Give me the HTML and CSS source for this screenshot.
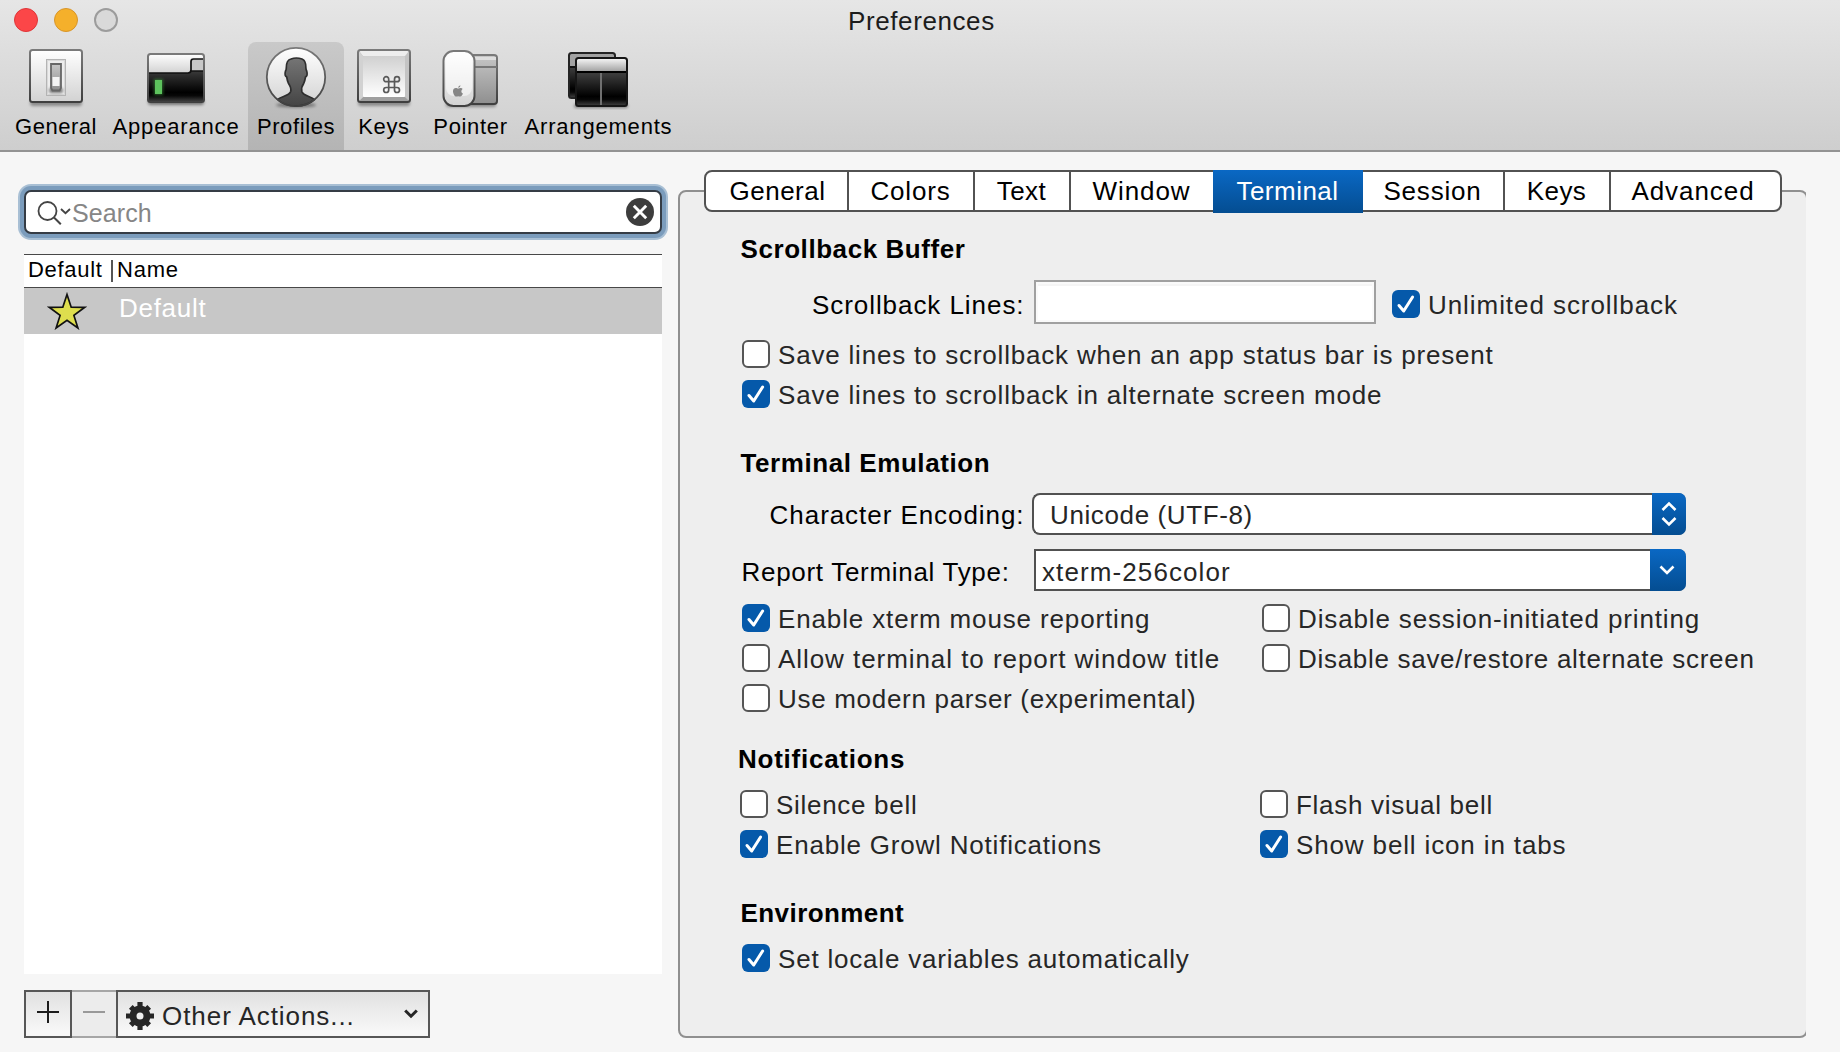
FILE: index.html
```html
<!DOCTYPE html>
<html lang="en">
<head>
<meta charset="utf-8">
<title>Preferences</title>
<link rel="stylesheet" href="styles.css">
</head>
<body>
<svg class="defs" width="0" height="0" aria-hidden="true">
  <defs>
    <linearGradient id="edge" x1="0" y1="0" x2="0" y2="1"><stop offset="0" stop-color="#7a7a7a"/><stop offset="1" stop-color="#3f3f3f"/></linearGradient>
    <linearGradient id="plate" x1="0" y1="0" x2="0" y2="1"><stop offset="0" stop-color="#ffffff"/><stop offset="1" stop-color="#d2d2d2"/></linearGradient>
    <linearGradient id="plateUp" x1="0" y1="0" x2="0" y2="1"><stop offset="0" stop-color="#d0d0d0"/><stop offset="1" stop-color="#ffffff"/></linearGradient>
    <linearGradient id="dark" x1="0" y1="0" x2="0" y2="1"><stop offset="0" stop-color="#4c4c4c"/><stop offset=".35" stop-color="#3a3a3a"/><stop offset=".8" stop-color="#000"/><stop offset=".87" stop-color="#080808"/><stop offset="1" stop-color="#444"/></linearGradient>
    <linearGradient id="title" x1="0" y1="0" x2="0" y2="1"><stop offset="0" stop-color="#f2f2f2"/><stop offset="1" stop-color="#a4a4a4"/></linearGradient>
    <linearGradient id="head" x1="0" y1="0" x2="0" y2="1"><stop offset="0" stop-color="#757575"/><stop offset="1" stop-color="#444"/></linearGradient>
    <linearGradient id="grey" x1="0" y1="0" x2="0" y2="1"><stop offset="0" stop-color="#c6c6c6"/><stop offset="1" stop-color="#8f8f8f"/></linearGradient>
    <filter id="soft" x="-30%" y="-100%" width="160%" height="300%"><feGaussianBlur stdDeviation="1.8"/></filter>
    <path id="tick" d="M7 15.5 11.7 21 20.6 7" fill="none" stroke="#fff" stroke-width="3" stroke-linecap="round" stroke-linejoin="round"/>
  </defs>
</svg>

<header class="titlebar">
  <div class="caption">
    <div class="lights"><i class="light close"></i><i class="light minimize"></i><i class="light zoom"></i></div>
    <h1 class="title">Preferences</h1>
  </div>
  <nav class="toolbar">
    <a class="tool general">
      <svg width="64" height="66" viewBox="24 44 64 66">
        <rect x="30" y="100" width="52" height="6" rx="3" fill="#000" opacity=".35" filter="url(#soft)"/>
        <rect x="30" y="50" width="52" height="52" rx="2.5" fill="url(#plate)" stroke="url(#edge)" stroke-width="2"/>
        <rect x="46.5" y="59.5" width="19" height="36" fill="#d9d9d9" stroke="#b4b4b4"/>
        <rect x="48" y="61" width="16" height="33" fill="#ededed"/>
        <rect x="49" y="88" width="14" height="5" rx="2" fill="#777" filter="url(#soft)"/>
        <path d="M51 64h10v24l-1.500 2.500h-7L51 88z" fill="url(#grey)" stroke="#666" stroke-width="1.800"/>
        <path d="M52.500 77h7v9h-7z" fill="#f4f4f4"/>
      </svg>
      <span>General</span>
    </a>
    <a class="tool appearance">
      <svg width="64" height="66" viewBox="144 44 64 66">
        <rect x="148" y="99" width="56" height="6" rx="3" fill="#000" opacity=".45" filter="url(#soft)"/>
        <rect x="148" y="54" width="56" height="48" rx="2.500" fill="url(#dark)"/>
        <path d="M148 73V56.500q0-2.500 2.500-2.500h51q2.500 0 2.500 2.500V59h-10.500q-2.500 0-2.500 2.500V70q0 3-3 3z" fill="url(#plate)"/>
        <path d="M191 71V61.500q0-2.500 2.500-2.500H204v12z" fill="#c8c8c8"/>
        <path d="M148 73h40q3 0 3-3v-8.500q0-2.500 2.500-2.500H204M191 71h13" fill="none" stroke="#111" stroke-width="1.700"/>
        <rect x="148" y="54" width="56" height="48" rx="2.500" fill="none" stroke="url(#edge)" stroke-width="2"/>
        <rect x="154" y="79" width="9" height="16" fill="#3c9a3c" filter="url(#soft)" opacity=".6"/>
        <rect x="155" y="80" width="7" height="14" fill="#5dc25d"/>
      </svg>
      <span>Appearance</span>
    </a>
    <a class="tool profiles active">
      <svg width="64" height="66" viewBox="264 44 64 66">
        <ellipse cx="296" cy="105" rx="20" ry="2.500" fill="#000" opacity=".4" filter="url(#soft)"/>
        <circle cx="296" cy="77" r="29" fill="url(#plate)"/>
        <path d="M277.500 99.500c3.500-3.300 12-3.500 13.200-8 .7-3-.4-5.500-2.200-8-1-2.200-1.400-4-1.800-6.500-1.600-.8-1.900-3.500-1.200-6 .8-1 .8-1.300.8-3 0-4.700 1.700-8.500 4.700-9 3.500-1.300 7.500-1.200 11 0 3 1 4 4.500 3.900 9 0 1.700.2 2 .8 3 .7 2.500.4 5.200-1.200 6-.4 2.500-.8 4.300-1.800 6.500-1.800 2.500-2.600 5-1.900 8 1.200 4.500 9.200 4.700 12.700 8Q307 106 296 106q-11.500 0-18.500-6.500z" fill="url(#head)" stroke="#2e2e2e" stroke-width="1.700"/>
        <circle cx="296" cy="77" r="29.200" fill="none" stroke="url(#edge)" stroke-width="1.800"/>
      </svg>
      <span>Profiles</span>
    </a>
    <a class="tool keys">
      <svg width="64" height="66" viewBox="352 44 64 66">
        <rect x="358" y="100" width="52" height="6" rx="3" fill="#000" opacity=".35" filter="url(#soft)"/>
        <rect x="358" y="50" width="52" height="52" rx="2.500" fill="#c4c4c4"/>
        <path d="M359 51h50l-4 5h-42z" fill="#eee"/><path d="M359 101l4-4h42l4 4z" fill="#9f9f9f"/><path d="M359 51l4 5v41l-4 4z" fill="#d2d2d2"/>
        <rect x="363" y="56" width="42" height="41" rx="1" fill="url(#plateUp)"/>
        <rect x="358" y="50" width="52" height="52" rx="2.500" fill="none" stroke="url(#edge)" stroke-width="2"/>
        <path d="M388.700 81.700h5.800v5.800h-5.800zM388.700 81.700h-2.400a2.500 2.500 0 1 1 2.400-2.500zM394.500 81.700v-2.500a2.500 2.500 0 1 1 2.500 2.500zM394.500 87.500h2.500a2.500 2.500 0 1 1-2.500 2.500zM388.700 87.500V90a2.500 2.500 0 1 1-2.500-2.500z" fill="none" stroke="#5a5a5a" stroke-width="1.700"/>
      </svg>
      <span>Keys</span>
    </a>
    <a class="tool pointer">
      <svg width="64" height="66" viewBox="439 44 64 66">
        <rect x="446" y="102" width="50" height="5" rx="2" fill="#000" opacity=".35" filter="url(#soft)"/>
        <rect x="465" y="55" width="32" height="49" rx="3" fill="url(#grey)" stroke="url(#edge)" stroke-width="2"/>
        <path d="M470 57h26v3h-26z" fill="#dedede"/><path d="M470 67h27" stroke="#777" stroke-width="2"/>
        <rect x="443.500" y="51" width="31" height="55" rx="10" fill="url(#plate)" stroke="url(#edge)" stroke-width="2"/>
        <rect x="446" y="53" width="26" height="43" rx="8" fill="#fff" opacity=".5"/>
        <path d="M458.200 88.500c1.200 0 1.500-.6 2.700-.5.700 0 1.300.3 1.800.9-1.900 1.300-1.600 3.900.3 4.700-.8 1.900-1.800 3-2.700 3-.8 0-1.200-.4-2.100-.4s-1.300.4-2.100.4c-1.500 0-3.100-3.200-3.100-5.300 0-2.400 1.500-3.400 2.900-3.300 1 0 1.500.5 2.300.5zM458.200 87.800c0-1.300.8-2.200 2.200-2.600 0 1.500-.8 2.400-2.200 2.600z" fill="#868686"/>
      </svg>
      <span>Pointer</span>
    </a>
    <a class="tool arrangements">
      <svg width="64" height="66" viewBox="567 44 64 66">
        <rect x="574" y="104" width="54" height="4" rx="2" fill="#000" opacity=".4" filter="url(#soft)"/>
        <rect x="569" y="53" width="46" height="45" rx="2.500" fill="url(#dark)"/>
        <path d="M570 66V54h45v12z" fill="#a2a2a2"/><path d="M569 67h46" stroke="#111" stroke-width="2"/>
        <rect x="569" y="53" width="46" height="45" rx="2.500" fill="none" stroke="#242424" stroke-width="2"/>
        <rect x="576" y="58" width="51" height="48" rx="2.500" fill="url(#dark)"/>
        <path d="M577 71V59h49v12z" fill="url(#title)"/><path d="M576 72h51" stroke="#000" stroke-width="2"/>
        <path d="M601 73v32" stroke="#707070" stroke-width="2"/>
        <rect x="576" y="58" width="51" height="48" rx="2.500" fill="none" stroke="#161616" stroke-width="2"/>
      </svg>
      <span>Arrangements</span>
    </a>
  </nav>
</header>

<main class="content">
  <aside class="sidebar">
    <div class="search">
      <svg class="lens" width="36" height="24" viewBox="0 0 36 24" fill="none" stroke="#444" stroke-width="1.800"><circle cx="10.500" cy="10" r="9"/><path d="M17 16.500 23.800 23.200" stroke-width="2"/><path d="M24 8l4.500 4.200L33 8" stroke-width="1.900"/></svg>
      <span class="placeholder">Search</span>
      <svg class="clear" width="28" height="28" viewBox="0 0 28 28"><circle cx="14" cy="14" r="14" fill="#3d3d3d"/><path d="M7.800 7.800l12.400 12.400M20.200 7.800L7.800 20.200" stroke="#fff" stroke-width="2.900"/></svg>
    </div>
    <div class="table">
      <div class="thead"><span class="th-default">Default</span><span class="th-name">Name</span></div>
      <div class="row">
        <svg class="star" width="40" height="38" viewBox="0 0 40 38"><path d="M20 2.500l4.200 12.700 13.600.1-10.900 8.100 4 12.600L20 28.300 9.100 36l4-12.600L2.200 15.300l13.600-.1z" fill="#dede4e" stroke="#111" stroke-width="1.700"/></svg>
        <span>Default</span>
      </div>
    </div>
    <div class="actions">
      <button class="add" aria-label="Add"><svg width="22" height="22" viewBox="0 0 22 22"><path d="M11 0v22M0 11h22" stroke="#1c1c1c" stroke-width="2"/></svg></button>
      <button class="remove" aria-label="Remove"><svg width="22" height="22" viewBox="0 0 22 22"><path d="M0 11h22" stroke="#999" stroke-width="2"/></svg></button>
      <button class="other">
        <svg class="gear" width="28" height="28" viewBox="-14 -14 28 28"><circle r="7" fill="none" stroke="#262626" stroke-width="7"/><g stroke="#262626" stroke-width="5.200"><path d="M0-14v5M0 14v-5M-14 0h5M14 0h-5"/><path d="M0-13v5M0 13v-5M-13 0h5M13 0h-5" transform="rotate(45)"/></g></svg>
        <span>Other Actions...</span>
        <svg class="chev" width="14" height="10" viewBox="0 0 14 10"><path d="M1.200 1.500 7 7.200l5.800-5.700" fill="none" stroke="#262626" stroke-width="3"/></svg>
      </button>
    </div>
  </aside>

  <section class="panel">
    <nav class="tabs">
      <a class="tab snug">General</a><a class="tab">Colors</a><a class="tab snug">Text</a><a class="tab wide last-before">Window</a><a class="tab snug selected">Terminal</a><a class="tab">Session</a><a class="tab snug">Keys</a><a class="tab wide advanced">Advanced</a>
    </nav>

    <div class="group scrollback">
      <h2>Scrollback Buffer</h2>
      <div class="field lines">
        <label class="name wide">Scrollback Lines:</label>
        <div class="textbox"></div>
        <label class="check wide"><svg class="box on" viewBox="0 0 28 28"><use href="#tick"/></svg>Unlimited scrollback</label>
      </div>
      <label class="check"><i class="box"></i>Save lines to scrollback when an app status bar is present</label>
      <label class="check"><svg class="box on" viewBox="0 0 28 28"><use href="#tick"/></svg>Save lines to scrollback in alternate screen mode</label>
    </div>

    <div class="group emulation">
      <h2>Terminal Emulation</h2>
      <div class="field encoding">
        <label class="name wide">Character Encoding:</label>
        <div class="select"><span class="value">Unicode (UTF-8)</span><span class="knob"><svg width="16" height="26" viewBox="0 0 16 26" fill="none" stroke="#fff" stroke-width="2.600"><path d="M1.500 9 8 2.500 14.500 9M1.500 17 8 23.500 14.500 17"/></svg></span></div>
      </div>
      <div class="field term">
        <label class="name tight">Report Terminal Type:</label>
        <div class="combo"><span class="value">xterm-256color</span><span class="knob"><svg width="16" height="10" viewBox="0 0 16 10" fill="none" stroke="#fff" stroke-width="2.600"><path d="M1.500 1.500 8 8l6.500-6.500"/></svg></span></div>
      </div>
      <div class="checks">
        <label class="check mid"><svg class="box on" viewBox="0 0 28 28"><use href="#tick"/></svg>Enable xterm mouse reporting</label>
        <label class="check mid"><i class="box"></i>Disable session-initiated printing</label>
        <label class="check wide"><i class="box"></i>Allow terminal to report window title</label>
        <label class="check tight"><i class="box"></i>Disable save/restore alternate screen</label>
        <label class="check tight"><i class="box"></i>Use modern parser (experimental)</label>
      </div>
    </div>

    <div class="group notifications">
      <h2>Notifications</h2>
      <div class="checks">
        <label class="check tight"><i class="box"></i>Silence bell</label>
        <label class="check tight"><i class="box"></i>Flash visual bell</label>
        <label class="check"><svg class="box on" viewBox="0 0 28 28"><use href="#tick"/></svg>Enable Growl Notifications</label>
        <label class="check mid"><svg class="box on" viewBox="0 0 28 28"><use href="#tick"/></svg>Show bell icon in tabs</label>
      </div>
    </div>

    <div class="group environment">
      <h2>Environment</h2>
      <label class="check"><svg class="box on" viewBox="0 0 28 28"><use href="#tick"/></svg>Set locale variables automatically</label>
    </div>
  </section>
</main>
</body>
</html>
```
FILE: styles.css
```css
* { box-sizing: border-box; }
html, body { height: 100%; }
body {
  margin: 0;
  overflow: hidden;
  display: flex;
  flex-direction: column;
  background: #f6f6f6;
  color: #000;
  font: 26px/30px "Liberation Sans", Arial, sans-serif;
  letter-spacing: .8px;
  white-space: nowrap;
}
svg { display: block; flex: none; }
.defs { position: absolute; }
h1, h2 { margin: 0; font-size: 26px; }

/* letter-spacing steps */
.snug { letter-spacing: .48px; }
.tight { letter-spacing: .7px; }
.mid { letter-spacing: .86px; }
.wide { letter-spacing: .94px; }

/* title bar and toolbar */
.titlebar {
  flex: none;
  height: 152px;
  background: linear-gradient(#e6e6e6, #cecece);
  border-bottom: 2px solid #939393;
}
.caption { height: 42px; display: grid; grid-template-columns: 848px 1fr; }
.lights { display: flex; gap: 16px; padding: 8px 0 0 14px; }
.light { width: 24px; height: 24px; border-radius: 50%; border: 1px solid; }
.close { background: #fc4648; border-color: #df3538; }
.minimize { background: #f5b02b; border-color: #d8952a; }
.zoom { background: #d9d9d9; border: 2px solid #9c9c9c; }
.title { font-weight: 400; letter-spacing: .6px; padding-top: 6px; color: #1c1c1c; }
.toolbar { display: flex; padding-left: 8px; height: 108px; }
.tool {
  display: flex;
  flex-direction: column;
  align-items: center;
  padding-top: 2px;
  font-size: 22px;
  line-height: 27px;
  letter-spacing: .65px;
}
.tool span { margin-top: 3px; }
.general { width: 95px; letter-spacing: .5px; }
.general span { padding-left: 1px; }
.appearance { width: 145px; letter-spacing: .84px; }
.appearance span { padding-left: 1px; }
.profiles { width: 96px; letter-spacing: .6px; }
.keys { width: 80px; }
.pointer { width: 93px; }
.arrangements { width: 163px; letter-spacing: .8px; }
.tool.active { background: linear-gradient(#c9c9c9, #b4b4b4); border-radius: 8px 8px 0 0; }

.content { flex: 1; display: flex; padding: 38px 0 14px 24px; min-height: 0; }

/* profile list */
.sidebar { width: 638px; display: flex; flex-direction: column; flex: none; }
.search {
  height: 44px;
  display: flex;
  align-items: center;
  padding: 0 6px 0 11px;
  background: #fff;
  border: 2px solid #353c45;
  border-radius: 7px;
  box-shadow: 0 0 0 4px #7b9cbc, 0 0 0 6px #a8bfd4;
}
.lens { margin-top: 2px; }
.placeholder { color: #868686; font-size: 25px; letter-spacing: .1px; margin: 0 auto 0 -1px; padding-top: 2px; }
.table { flex: 1; margin-top: 20px; background: #fff; border-top: 1px solid #484848; }
.thead { display: flex; height: 33px; border-bottom: 1px solid #484848; font-size: 22px; line-height: 30px; padding-left: 4px; }
.th-default { width: 83px; letter-spacing: .7px; }
.th-name { border-left: 2px solid #555; height: 22px; margin-top: 5px; line-height: 20px; padding-left: 4px; }
.row { display: flex; height: 46px; background: #c7c7c7; color: #fff; padding: 4px 0 0 23px; letter-spacing: .72px; }
.row span { margin: 1px 0 0 32px; }
.actions { display: flex; height: 48px; margin-top: 16px; }
.actions button {
  font: inherit;
  letter-spacing: .94px;
  color: #262626;
  border: 2px solid #575757;
  background: linear-gradient(#e1e1e1, #f7f7f7 90%);
  padding: 0;
  display: flex;
  align-items: center;
}
.actions .add { width: 48px; justify-content: center; padding-bottom: 4px; }
.actions .remove { width: 44px; justify-content: center; padding-bottom: 4px; border-color: #a6a6a6; border-width: 2px 0; background: #ececec; }
.actions .other { width: 314px; padding: 0 10px 0 8px; }
.other .gear { margin-top: 4px; }
.other span { margin: 4px auto 0 8px; }

/* settings panel; its right rule is cut off by the clip */
.panel {
  width: 1130px;
  flex: none;
  margin-left: 16px;
  background: #eee;
  border: 2px solid #8f8f8f;
  border-radius: 8px;
  clip-path: inset(-24px 2px 0 0);
}
.tabs {
  display: grid;
  grid-template-columns: 143px 126px 96px 142px 150px 142px 106px 1fr;
  width: 1078px;
  height: 42px;
  margin: -22px 0 0 24px;
  background: #fff;
  border: 2px solid #525252;
  border-radius: 8px;
}
.tab { text-align: center; border-right: 2px solid #525252; line-height: 39px; padding-right: 1px; }
.tab:first-child { padding: 0 0 0 2px; }
.tab:last-child, .last-before { border-right: 0; }
.advanced { padding-right: 5px; }
.selected { margin: -2px 0; padding-top: 2px; border-right: 0; color: #fff; background: linear-gradient(#0a68c4, #044d91); }

.group { padding-left: 62px; }
.group h2 { margin-left: -1.5px; letter-spacing: .57px; }
.scrollback { margin-top: 22px; }
.emulation { margin-top: 40px; }
.notifications { margin-top: 32px; padding-left: 60px; }
.environment { margin-top: 40px; }
.environment h2 { letter-spacing: .43px; }
.notifications h2 { letter-spacing: .75px; margin-left: -2px; }

.check { display: flex; height: 28px; color: #262626; }
.check + .check { margin-top: 12px; }
.box { flex: none; width: 28px; height: 28px; margin-right: 8px; border-radius: 6px; background: #fff; border: 2px solid #555; }
.box.on { border: 0; background: #0559aa; }
.checks { display: grid; grid-template-columns: 520px auto; justify-content: start; row-gap: 12px; }
.checks .check { margin: 0; }
.notifications .checks, .environment .check { margin-top: 16px; }

.field { display: flex; }
.name { width: 292px; }
.lines { height: 44px; margin: 16px 0; }
.lines .name { text-align: right; padding: 10px 9.5px 0 0; }
.textbox { width: 342px; background: #fff; border: 2px solid #a0a0a0; box-shadow: inset 0 0 0 2px #fafafa, inset 0 4px 0 #f5f5f5; margin-right: 16px; }
.lines .check { margin-top: 10px; }
.encoding { margin-top: 15px; }
.encoding .name { width: 290px; text-align: right; padding: 7px 7.5px 0 0; }
.term { margin-top: 14px; margin-bottom: 13px; }
.term .name { margin-left: -.5px; width: 292.5px; padding-top: 8px; }
.select, .combo { display: flex; height: 42px; background: #fff; border: 2px solid #515151; border-right: 0; color: #262626; }
.select { width: 654px; border-radius: 8px; }
.combo { width: 652px; border-radius: 0 8px 8px 0; }
.select .value { padding: 5px 0 0 16px; letter-spacing: .62px; }
.combo .value { padding: 6px 0 0 6px; letter-spacing: 1.1px; }
.knob { width: 34px; height: 42px; margin: -2px 0 0 auto; display: flex; align-items: center; justify-content: center; background: linear-gradient(#0a68c4, #044d91); border-radius: 0 7px 7px 0; }
.combo .knob { width: 36px; padding-right: 3px; }
```
